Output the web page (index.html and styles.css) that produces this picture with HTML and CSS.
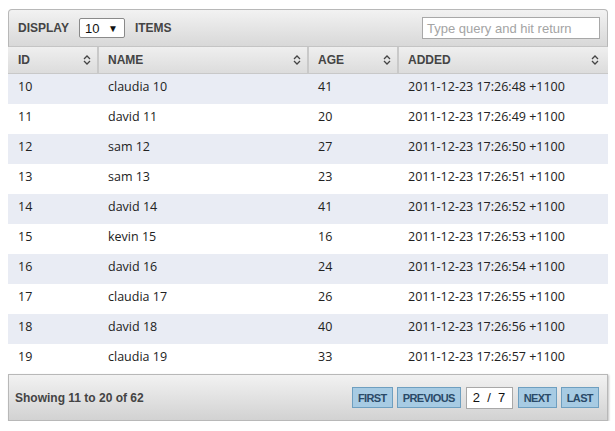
FILE: index.html
```html
<!DOCTYPE html>
<html>
<head>
<meta charset="utf-8">
<link rel="stylesheet" href="styles.css">
</head>
<body>
<div class="grid">
  <div class="topbar">
    <div class="display">
      <span class="lbl">DISPLAY</span>
      <span class="select"><span>10</span><span class="arrow">▼</span></span>
      <span class="lbl">ITEMS</span>
    </div>
    <div class="search">Type query and hit return</div>
  </div>
  <div class="thead">
    <div class="th c-id"><span>ID</span><svg class="sort" viewBox="0 0 8 12" width="8" height="12"><path d="M1 5 L4 2 L7 5 M1 7 L4 10 L7 7" fill="none" stroke="#444" stroke-width="1.3"/></svg></div>
    <div class="th c-name"><span>NAME</span><svg class="sort" viewBox="0 0 8 12" width="8" height="12"><path d="M1 5 L4 2 L7 5 M1 7 L4 10 L7 7" fill="none" stroke="#444" stroke-width="1.3"/></svg></div>
    <div class="th c-age"><span>AGE</span><svg class="sort" viewBox="0 0 8 12" width="8" height="12"><path d="M1 5 L4 2 L7 5 M1 7 L4 10 L7 7" fill="none" stroke="#444" stroke-width="1.3"/></svg></div>
    <div class="th c-added"><span>ADDED</span><svg class="sort" viewBox="0 0 8 12" width="8" height="12"><path d="M1 5 L4 2 L7 5 M1 7 L4 10 L7 7" fill="none" stroke="#444" stroke-width="1.3"/></svg></div>
  </div>
  <div class="tbody">
    <div class="tr odd"><div class="td c-id">10</div><div class="td c-name">claudia 10</div><div class="td c-age">41</div><div class="td c-added">2011-12-23 17:26:48 +1100</div></div>
    <div class="tr"><div class="td c-id">11</div><div class="td c-name">david 11</div><div class="td c-age">20</div><div class="td c-added">2011-12-23 17:26:49 +1100</div></div>
    <div class="tr odd"><div class="td c-id">12</div><div class="td c-name">sam 12</div><div class="td c-age">27</div><div class="td c-added">2011-12-23 17:26:50 +1100</div></div>
    <div class="tr"><div class="td c-id">13</div><div class="td c-name">sam 13</div><div class="td c-age">23</div><div class="td c-added">2011-12-23 17:26:51 +1100</div></div>
    <div class="tr odd"><div class="td c-id">14</div><div class="td c-name">david 14</div><div class="td c-age">41</div><div class="td c-added">2011-12-23 17:26:52 +1100</div></div>
    <div class="tr"><div class="td c-id">15</div><div class="td c-name">kevin 15</div><div class="td c-age">16</div><div class="td c-added">2011-12-23 17:26:53 +1100</div></div>
    <div class="tr odd"><div class="td c-id">16</div><div class="td c-name">david 16</div><div class="td c-age">24</div><div class="td c-added">2011-12-23 17:26:54 +1100</div></div>
    <div class="tr"><div class="td c-id">17</div><div class="td c-name">claudia 17</div><div class="td c-age">26</div><div class="td c-added">2011-12-23 17:26:55 +1100</div></div>
    <div class="tr odd"><div class="td c-id">18</div><div class="td c-name">david 18</div><div class="td c-age">40</div><div class="td c-added">2011-12-23 17:26:56 +1100</div></div>
    <div class="tr"><div class="td c-id">19</div><div class="td c-name">claudia 19</div><div class="td c-age">33</div><div class="td c-added">2011-12-23 17:26:57 +1100</div></div>
  </div>
  <div class="footer">
    <div class="showing">Showing 11 to 20 of 62</div>
    <div class="pager">
      <span class="btn">FIRST</span>
      <span class="btn">PREVIOUS</span>
      <span class="page">2 &nbsp;/ &nbsp;7</span>
      <span class="btn">NEXT</span>
      <span class="btn">LAST</span>
    </div>
  </div>
</div>
</body>
</html>
```
FILE: styles.css
```css
html, body {
  margin: 0;
  padding: 0;
  background: #fff;
}
body {
  padding: 9px 7px 0 8px;
}
.grid {
  width: 600px;
  font-family: "Liberation Sans", Arial, sans-serif;
}
.topbar {
  height: 36px;
  border: 1px solid #b8b8b8;
  border-bottom: 1px solid #c4c4c4;
  border-radius: 4px 4px 0 0;
  background: linear-gradient(#f2f2f2, #d8d8d8);
  display: flex;
  align-items: center;
  justify-content: space-between;
  padding: 0 7px 0 9px;
}
.display {
  display: flex;
  align-items: center;
  gap: 10px;
}
.lbl {
  font-weight: bold;
  font-size: 12px;
  color: #444;
}
.select {
  border: 1px solid #8a8a8a;
  border-radius: 2px;
  background: #fff;
  display: flex;
  align-items: center;
  justify-content: space-between;
  padding: 0 6px 0 5px;
  box-sizing: border-box;
  width: 46px;
  height: 20px;
  font-size: 13px;
  color: #111;
}
.arrow {
  font-size: 10px;
}
.search {
  width: 178px;
  height: 22px;
  box-sizing: border-box;
  border: 1px solid #a8a8a8;
  background: #fff;
  font-size: 13px;
  color: #a4a4a4;
  padding: 3px 4px;
  line-height: 15px;
}
.thead {
  display: flex;
  height: 26px;
  background: linear-gradient(#efefef, #dcdcdc);
  border-bottom: 1px solid #c8c8c8;
}
.th {
  display: flex;
  align-items: center;
  justify-content: space-between;
  padding: 0 6px 0 9px;
  box-sizing: border-box;
  font-weight: bold;
  font-size: 12px;
  color: #444;
  border-right: 2px solid #c9c9c9;
}
.th.c-id { padding-left: 10px; }
.th.c-added { border-right: none; padding-right: 9px; }
.c-id { width: 91px; }
.c-name { width: 210px; }
.c-age { width: 90px; }
.c-added { flex: 1; }
.tr {
  display: flex;
  height: 30px;
  align-items: flex-start;
  background: #fff;
}
.tr.odd {
  background: #e9ecf4;
}
.td {
  font-family: "Open Sans", sans-serif;
  font-size: 12.5px;
  line-height: 17px;
  padding-top: 4px;
  color: #222;
  padding-left: 9px;
  box-sizing: border-box;
}
.td.c-id { padding-left: 10px; }
.footer {
  height: 47px;
  box-sizing: border-box;
  border: 1px solid #b8b8b8;
  background: linear-gradient(#f2f2f2, #d2d2d2);
  box-shadow: 1px 1px 2px rgba(0,0,0,0.25);
  display: flex;
  align-items: center;
  justify-content: space-between;
  padding: 0 8px 0 6px;
}
.showing {
  font-weight: bold;
  font-size: 12px;
  color: #444;
}
.pager {
  display: flex;
  align-items: center;
  gap: 4px;
}
.btn {
  height: 21px;
  box-sizing: border-box;
  border: 1px solid #6e9fc0;
  background: #a7cbe3;
  font-weight: bold;
  font-size: 11px;
  letter-spacing: -0.6px;
  color: #2a4a68;
  padding: 0 5px;
  display: flex;
  align-items: center;
}
.page {
  width: 47px;
  height: 22px;
  box-sizing: border-box;
  border: 1px solid #a8a8a8;
  background: #fff;
  font-size: 13px;
  color: #111;
  display: flex;
  align-items: center;
  padding-left: 6px;
  margin: 0 1px;
}
```
